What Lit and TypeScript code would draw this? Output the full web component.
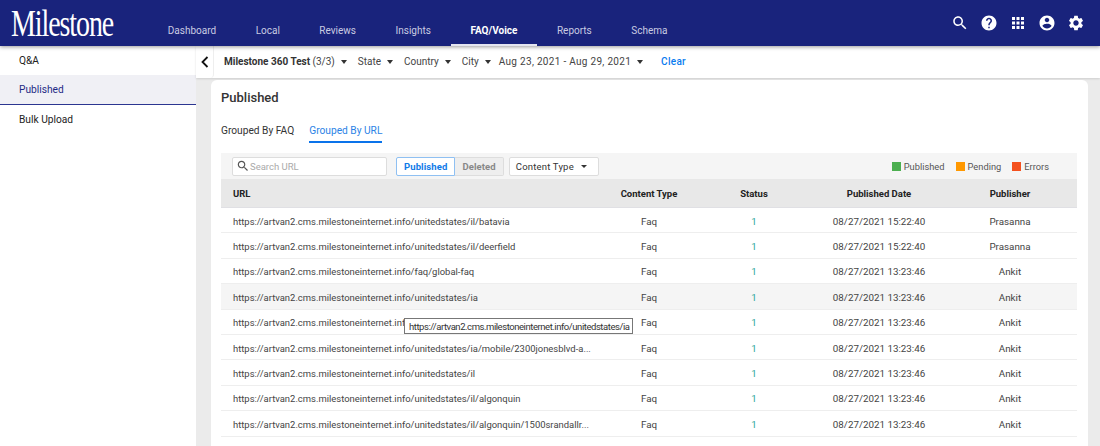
import { css, html, LitElement, svg } from 'lit'
import { customElement } from 'lit/decorators.js'

const ICONS = [
	'M15.5 14h-.79l-.28-.27C15.41 12.59 16 11.11 16 9.5 16 5.91 13.09 3 9.5 3S3 5.91 3 9.5 5.91 16 9.5 16c1.61 0 3.09-.59 4.23-1.57l.27.28v.79l5 4.99L20.49 19l-4.99-5zm-6 0C7.01 14 5 11.99 5 9.5S7.01 5 9.5 5 14 7.01 14 9.5 11.99 14 9.5 14z',
	'M12 2C6.48 2 2 6.48 2 12s4.48 10 10 10 10-4.48 10-10S17.52 2 12 2zm1 17h-2v-2h2v2zm2.07-7.75l-.9.92C13.45 12.9 13 13.5 13 15h-2v-.5c0-1.1.45-2.1 1.17-2.83l1.24-1.26c.37-.36.59-.86.59-1.41 0-1.1-.9-2-2-2s-2 .9-2 2H8c0-2.21 1.79-4 4-4s4 1.79 4 4c0 .88-.36 1.68-.93 2.25z',
	'M4 8h4V4H4v4zm6 12h4v-4h-4v4zm-6 0h4v-4H4v4zm0-6h4v-4H4v4zm6 0h4v-4h-4v4zm6-10v4h4V4h-4zm-6 4h4V4h-4v4zm6 6h4v-4h-4v4zm0 6h4v-4h-4v4z',
	'M12 2C6.48 2 2 6.48 2 12s4.48 10 10 10 10-4.48 10-10S17.52 2 12 2zm0 3c1.66 0 3 1.34 3 3s-1.34 3-3 3-3-1.34-3-3 1.34-3 3-3zm0 14.2c-2.5 0-4.71-1.28-6-3.22.03-1.99 4-3.08 6-3.08 1.99 0 5.97 1.09 6 3.08-1.29 1.94-3.5 3.22-6 3.22z',
	'M19.14 12.94c.04-.3.06-.61.06-.94 0-.32-.02-.64-.07-.94l2.03-1.58c.18-.14.23-.41.12-.61l-1.92-3.32c-.12-.22-.37-.29-.59-.22l-2.39.96c-.5-.38-1.03-.7-1.62-.94l-.36-2.54c-.04-.24-.24-.41-.48-.41h-3.84c-.24 0-.43.17-.47.41l-.36 2.54c-.59.24-1.13.57-1.62.94l-2.39-.96c-.22-.08-.47 0-.59.22L2.74 8.87c-.12.21-.08.47.12.61l2.03 1.58c-.05.3-.09.63-.09.94s.02.64.07.94l-2.03 1.58c-.18.14-.23.41-.12.61l1.92 3.32c.12.22.37.29.59.22l2.39-.96c.5.38 1.03.7 1.62.94l.36 2.54c.05.24.24.41.48.41h3.84c.24 0 .44-.17.47-.41l.36-2.54c.59-.24 1.13-.56 1.62-.94l2.39.96c.22.08.47 0 .59-.22l1.92-3.32c.12-.22.07-.47-.12-.61l-2.01-1.58zM12 15.6c-1.98 0-3.6-1.62-3.6-3.6s1.62-3.6 3.6-3.6 3.6 1.62 3.6 3.6-1.62 3.6-3.6 3.6z',
]

const NAV = ['Dashboard', 'Local', 'Reviews', 'Insights', 'FAQ/Voice', 'Reports', 'Schema']

const BASE = 'https://artvan2.cms.milestoneinternet.info'
const ROWS = [
	['/unitedstates/il/batavia', '08/27/2021 15:22:40', 'Prasanna'],
	['/unitedstates/il/deerfield', '08/27/2021 15:22:40', 'Prasanna'],
	['/faq/global-faq', '08/27/2021 13:23:46', 'Ankit'],
	['/unitedstates/ia', '08/27/2021 13:23:46', 'Ankit'],
	['/unitedstates/ia/desmoines', '08/27/2021 13:23:46', 'Ankit'],
	['/unitedstates/ia/mobile/2300jonesblvd-a...', '08/27/2021 13:23:46', 'Ankit'],
	['/unitedstates/il', '08/27/2021 13:23:46', 'Ankit'],
	['/unitedstates/il/algonquin', '08/27/2021 13:23:46', 'Ankit'],
	['/unitedstates/il/algonquin/1500srandallr...', '08/27/2021 13:23:46', 'Ankit'],
	['/unitedstates/il/algonquin/mobile', '08/27/2021 13:23:46', 'Ankit'],
]

const caret = html`<span class="caret"></span>`

@customElement('app-root')
export class AppRoot extends LitElement {
	static styles = css`
		:host {
			display: block;
			position: relative;
			height: 446px;
			overflow: hidden;
			font-family: Roboto, 'Liberation Sans', sans-serif;
			font-size: 11px;
			color: #333;
			background: #fff;
		}

		.page-header {
			display: flex;
			align-items: stretch;
			height: 46px;
			background: #19237c;
			box-shadow: 0 1px 4px rgba(0, 0, 0, 0.4);
			position: relative;
			z-index: 2;
		}

		.logo {
			width: 148px;
			box-sizing: border-box;
			padding: 5px 0 0 11px;
			font-family: 'Liberation Serif', serif;
			font-size: 37px;
			line-height: 38px;
			letter-spacing: -1.4px;
			color: #fff;
		}

		.logo span {
			display: inline-block;
			transform: scaleX(0.755);
			transform-origin: left center;
		}

		.nav {
			display: flex;
			flex: 1;
		}

		.nav a {
			display: flex;
			align-items: center;
			height: 46px;
			padding: 17px 19.75px 0;
			box-sizing: border-box;
			border-bottom: 2px solid transparent;
			font-size: 10px;
			color: #c9cbe2;
		}

		.nav a.active {
			color: #fff;
			font-weight: 700;
			border-bottom-color: #e4e5f0;
		}

		.header-icons {
			display: flex;
			align-items: center;
			gap: 11px;
			padding: 0 15px 1px 0;
		}

		.header-icons svg {
			width: 18px;
			height: 18px;
			fill: #fff;
		}

		.body {
			display: flex;
			height: 400px;
		}

		.side {
			width: 196px;
			flex: none;
			font-size: 10.2px;
			color: #222;
		}

		.side div {
			height: 29px;
			padding-left: 19px;
			display: flex;
			align-items: center;
		}

		.side .active {
			height: 30px;
			box-sizing: border-box;
			background: #f0f0f5;
			color: #1f2a85;
			border-bottom: 1px solid #2b3590;
		}

		.main {
			flex: 1;
			background: #ebebeb;
			min-width: 0;
		}

		.filters {
			display: flex;
			align-items: center;
			height: 32px;
			padding-bottom: 1px;
			box-sizing: border-box;
			background: #fff;
			box-shadow: 0 1px 2px rgba(0, 0, 0, 0.12);
			font-size: 10px;
			color: #444;
		}

		.back {
			width: 18px;
			height: 33px;
			flex: none;
			display: flex;
			align-items: center;
			justify-content: center;
			margin-right: 10px;
			border-right: 1px solid #eee;
			border-radius: 0 0 4px 0;
			box-sizing: border-box;
		}

		.back svg {
			width: 8px;
			height: 12px;
		}

		.filter {
			display: flex;
			align-items: center;
			gap: 6px;
			margin-right: 11px;
			white-space: nowrap;
		}

		.filter.city {
			margin-right: 8px;
		}

		.filter.range {
			letter-spacing: 0.3px;
			margin-right: 18px;
		}

		.filter b {
			font-weight: 700;
			color: #333;
		}

		.caret {
			display: inline-block;
			border-left: 3.5px solid transparent;
			border-right: 3.5px solid transparent;
			border-top: 4px solid #333;
		}

		.clear {
			color: #0a7bef;
			font-weight: 500;
			letter-spacing: 0.3px;
		}

		.card {
			margin: 2px 12px 0 15px;
			height: 380px;
			padding: 0 11px 0 10px;
			background: #fff;
			border-radius: 6px 6px 0 0;
		}

		.card h2 {
			margin: 0;
			padding-top: 10px;
			height: 35px;
			box-sizing: border-box;
			font-size: 13px;
			line-height: 16px;
			font-weight: 500;
			color: #333;
		}

		.tabs {
			display: flex;
			gap: 15px;
			height: 38px;
			padding-top: 8px;
			box-sizing: border-box;
			font-size: 10.2px;
		}

		.tabs span {
			height: 20px;
			line-height: 16px;
			box-sizing: border-box;
		}

		.tabs .active {
			color: #2b83e6;
			border-bottom: 2px solid #0a73ea;
		}

		.toolbar {
			display: flex;
			align-items: center;
			height: 26px;
			padding: 0 11px;
			background: #f5f5f5;
			font-size: 9.5px;
		}

		.search {
			display: flex;
			align-items: center;
			width: 155px;
			height: 19px;
			padding-left: 3px;
			box-sizing: border-box;
			margin-right: 9px;
			background: #fff;
			border: 1px solid #ddd;
			border-radius: 2px;
			color: #aaa;
		}

		.search svg {
			width: 14px;
			height: 14px;
			fill: #555;
		}

		.seg {
			display: flex;
			height: 19px;
			margin-right: 5px;
			font-weight: 700;
			letter-spacing: 0.1px;
		}

		.seg span {
			display: flex;
			align-items: center;
			padding: 0 7px;
			border: 1px solid #ddd;
			border-left: 0;
			border-radius: 0 2px 2px 0;
			color: #888;
			background: #eee;
		}

		.seg .active {
			color: #0f7be8;
			background: #fff;
			border: 1px solid #8fc0f2;
			border-radius: 2px 0 0 2px;
		}

		.ctype {
			display: flex;
			align-items: center;
			gap: 7px;
			width: 90px;
			height: 19px;
			padding: 0 6px;
			box-sizing: border-box;
			background: #fff;
			border: 1px solid #ddd;
			border-radius: 2px;
			letter-spacing: 0.2px;
		}

		.ctype .caret {
			border-width: 3px 3px 0;
		}

		.legend {
			display: flex;
			gap: 11px;
			margin-left: auto;
			margin-right: 17px;
			font-size: 9.3px;
			color: #555;
		}

		.legend span {
			display: flex;
			align-items: center;
			gap: 3px;
		}

		.legend i {
			width: 9px;
			height: 9px;
		}

		.row {
			display: grid;
			grid-template-columns: 384px 88px 122px 128px 134px;
			align-items: center;
			height: 25.4px;
			padding-top: 2px;
			box-sizing: border-box;
			border-bottom: 1px solid #eee;
			font-size: 9.8px;
			color: #444;
			text-align: center;
			white-space: nowrap;
		}

		.row > :first-child {
			padding-left: 12px;
			text-align: left;
			font-size: 9.45px;
		}

		.row.head {
			height: 29px;
			padding-top: 0;
			background: #e8e8e8;
			border-bottom: 1px solid #e0e0e4;
			font-size: 9.5px;
			font-weight: 700;
			color: #222;
		}

		.row.hover {
			background: #f5f5f5;
		}

		.status {
			color: #26a69a;
		}

		.tooltip {
			position: absolute;
			left: 404px;
			top: 318px;
			width: 229px;
			height: 16px;
			padding-left: 4px;
			box-sizing: border-box;
			display: flex;
			align-items: center;
			background: #fff;
			border: 1px solid #777;
			font-size: 9.5px;
			letter-spacing: -0.45px;
			color: #333;
			white-space: nowrap;
		}
	`

	render() {
		return html`
			<header class="page-header">
				<div class="logo"><span>Milestone</span></div>
				<nav class="nav">
					${NAV.map((n) => html`<a class=${n === 'FAQ/Voice' ? 'active' : ''}>${n}</a>`)}
				</nav>
				<div class="header-icons">
					${ICONS.map((d) => html`<svg viewBox="0 0 24 24">${svg`<path d=${d}></path>`}</svg>`)}
				</div>
			</header>
			<div class="body">
				<aside class="side">
					<div>Q&amp;A</div>
					<div class="active">Published</div>
					<div>Bulk Upload</div>
				</aside>
				<section class="main">
					<div class="filters">
						<div class="back">
							<svg viewBox="0 0 8 12"><path d="M6.5 1 1.5 6l5 5" fill="none" stroke="#111" stroke-width="1.8"></path></svg>
						</div>
						<span class="filter"><span><b>Milestone 360 Test</b> (3/3)</span>${caret}</span>
						<span class="filter">State ${caret}</span>
						<span class="filter">Country ${caret}</span>
						<span class="filter city">City ${caret}</span>
						<span class="filter range">Aug 23, 2021 - Aug 29, 2021 ${caret}</span>
						<span class="clear">Clear</span>
					</div>
					<div class="card">
						<h2>Published</h2>
						<div class="tabs">
							<span>Grouped By FAQ</span>
							<span class="active">Grouped By URL</span>
						</div>
						<div class="toolbar">
							<div class="search">
								<svg viewBox="0 0 24 24"><path d=${ICONS[0]}></path></svg>
								Search URL
							</div>
							<div class="seg"><span class="active">Published</span><span>Deleted</span></div>
							<div class="ctype">Content Type ${caret}</div>
							<div class="legend">
								<span><i style="background:#4caf50"></i>Published</span>
								<span><i style="background:#ff9800"></i>Pending</span>
								<span><i style="background:#f4511e"></i>Errors</span>
							</div>
						</div>
						<div class="row head">
							<span>URL</span><span>Content Type</span><span>Status</span><span>Published Date</span><span>Publisher</span>
						</div>
						${ROWS.map(
							(r, i) => html`
								<div class="row ${i === 3 ? 'hover' : ''}">
									<span>${BASE + r[0]}</span>
									<span>Faq</span>
									<span class="status">1</span>
									<span>${r[1]}</span>
									<span>${r[2]}</span>
								</div>
							`,
						)}
					</div>
				</section>
			</div>
			<div class="tooltip">${BASE}/unitedstates/ia</div>
		`
	}
}
